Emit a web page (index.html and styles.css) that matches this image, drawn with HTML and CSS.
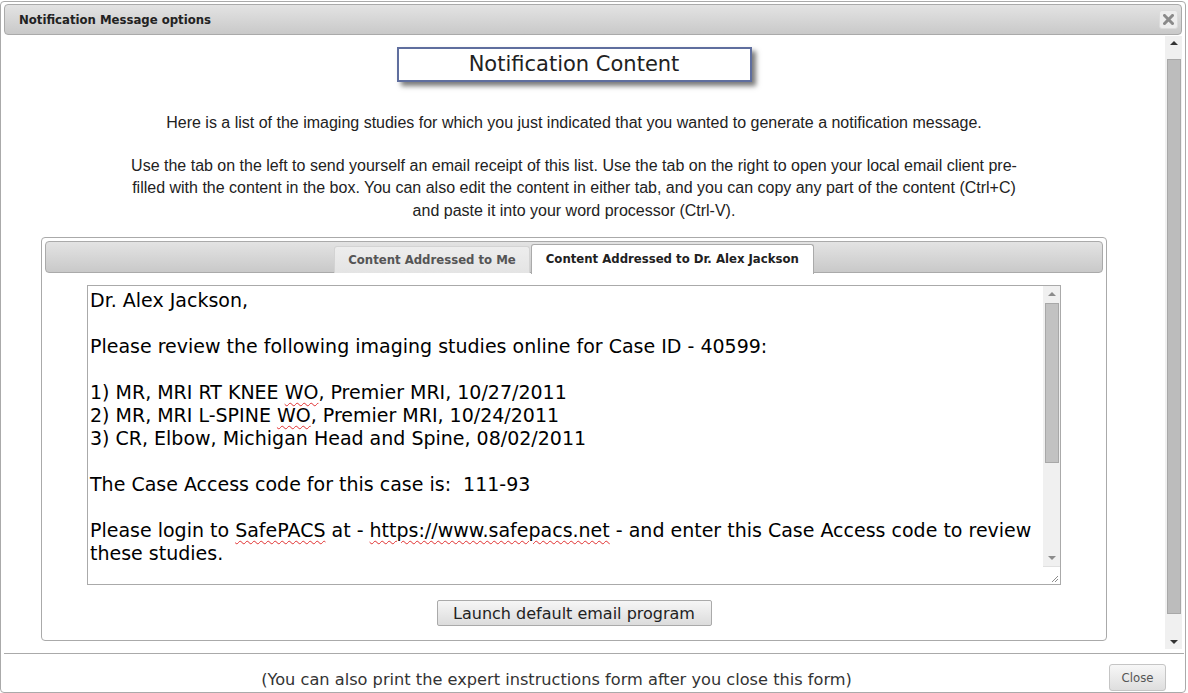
FILE: index.html
```html
<!DOCTYPE html>
<html>
<head>
<meta charset="utf-8">
<title>Notification Message options</title>
<link rel="stylesheet" href="styles.css">
</head>
<body>
<div class="dialog">
  <div class="titlebar">
    <span class="title">Notification Message options</span>
    <span class="close-x"><svg width="11" height="11" viewBox="0 0 11 11"><path d="M1.5 1.5 L9.5 9.5 M9.5 1.5 L1.5 9.5" stroke="#8a8a8a" stroke-width="3" stroke-linecap="square"/></svg></span>
  </div>
  <div class="content">
    <div class="scroll-body">
      <div class="inner">
        <div class="heading-wrap"><div class="heading">Notification Content</div></div>
        <p class="intro">Here is a list of the imaging studies for which you just indicated that you wanted to generate a notification message.</p>
        <p class="intro2">Use the tab on the left to send yourself an email receipt of this list. Use the tab on the right to open your local email client pre-filled with the content in the box. You can also edit the content in either tab, and you can copy any part of the content (Ctrl+C) and paste it into your word processor (Ctrl-V).</p>
        <div class="tabs">
          <ul class="tabnav">
            <li class="tab">Content Addressed to Me</li>
            <li class="tab active">Content Addressed to Dr. Alex Jackson</li>
          </ul>
          <div class="panel">
            <div class="textarea">
              <div class="ta-text">
                <div class="ln">Dr. Alex Jackson,</div>
                <div class="ln"></div>
                <div class="ln">Please review the following imaging studies online for Case ID - 40599:</div>
                <div class="ln"></div>
                <div class="ln">1) MR, MRI RT KNEE <span class="sp">WO</span>, Premier MRI, 10/27/2011</div>
                <div class="ln">2) MR, MRI L-SPINE <span class="sp">WO</span>, Premier MRI, 10/24/2011</div>
                <div class="ln">3) CR, Elbow, Michigan Head and Spine, 08/02/2011</div>
                <div class="ln"></div>
                <div class="ln">The Case Access code for this case is:  111-93</div>
                <div class="ln"></div>
                <div class="ln">Please login to <span class="sp">SafePACS</span> at - <span class="sp">https://www.safepacs.net</span> - and enter this Case Access code to review</div>
                <div class="ln">these studies.</div>
              </div>
              <div class="ta-scroll">
                <div class="ta-arrow up"></div>
                <div class="ta-track"><div class="ta-thumb"></div></div>
                <div class="ta-arrow down"></div>
                <div class="ta-grip"><svg width="17" height="17" viewBox="0 0 17 17"><path d="M9 15 L15 9 M12 15 L15 12" stroke="#8c8c8c" stroke-width="1"/></svg></div>
              </div>
            </div>
            <div class="btn-row"><button class="btn">Launch default email program</button></div>
          </div>
        </div>
      </div>
    </div>
    <div class="vscroll">
      <div class="vs-arrow up"></div>
      <div class="vs-track"><div class="vs-thumb"></div></div>
      <div class="vs-arrow down"></div>
    </div>
  </div>
  <div class="footer">
    <div class="footer-text">(You can also print the expert instructions form after you close this form)</div>
    <button class="close-btn">Close</button>
  </div>
</div>
</body>
</html>
```
FILE: styles.css
```css
body {
  margin: 0;
  background: #fff;
  font-family: "Liberation Sans", Arial, sans-serif;
}

.dialog {
  box-sizing: border-box;
  width: 1186px;
  height: 692px;
  margin-top: 1px;
  border: 1px solid #aaa;
  border-radius: 4px;
  padding: 2px 3px 0 3px;
  display: flex;
  flex-direction: column;
  font-family: "DejaVu Sans", sans-serif;
}

.titlebar {
  flex: none;
  box-sizing: border-box;
  height: 31px;
  border: 1px solid #aaa;
  border-radius: 4px;
  background: linear-gradient(#e3e3e3, #c9c9c9);
  display: flex;
  align-items: center;
  justify-content: space-between;
  padding: 0 3px 0 14px;
}

.title {
  font-family: "DejaVu Sans Condensed", "DejaVu Sans", sans-serif;
  font-stretch: condensed;
  font-size: 13px;
  font-weight: bold;
  color: #222;
}

.close-x {
  box-sizing: border-box;
  width: 19px;
  height: 19px;
  background: #ededed;
  border: 1px solid #dcdcdc;
  border-radius: 3px;
  display: flex;
  align-items: center;
  justify-content: center;
}

.content {
  flex: none;
  height: 618px;
  display: flex;
}

.scroll-body {
  width: 1161px;
  overflow: hidden;
}

.inner {
  box-sizing: border-box;
  width: 1066px;
  margin-left: 37px;
}

.heading-wrap {
  padding-top: 12px;
  text-align: center;
}

.heading {
  display: inline-block;
  box-sizing: border-box;
  width: 355px;
  height: 35px;
  border: 2px solid #5f6e9e;
  box-shadow: 4px 4px 5px #7a7a7a;
  font-size: 21px;
  line-height: 31px;
  color: #222;
  background: #fff;
}

.intro,
.intro2 {
  font-family: "Liberation Sans", Arial, sans-serif;
  font-size: 16px;
  line-height: 22.5px;
  color: #222;
  text-align: center;
  margin: 0 auto;
}

.intro {
  margin-top: 30px;
}

.intro2 {
  margin-top: 20px;
  max-width: 900px;
}

.tabs {
  box-sizing: border-box;
  margin-top: 15px;
  height: 404px;
  border: 1px solid #aaa;
  border-radius: 4px;
  padding: 3px;
}

.tabnav {
  box-sizing: border-box;
  height: 32px;
  margin: 0;
  padding: 0;
  list-style: none;
  border: 1px solid #aaa;
  border-radius: 4px;
  background: linear-gradient(#e3e3e3, #c9c9c9);
  display: flex;
  justify-content: center;
  align-items: flex-end;
  padding-left: 1px;
}

.tab {
  box-sizing: border-box;
  height: 27px;
  margin-bottom: -1px;
  margin-right: 1px;
  padding: 0 13px;
  border: 1px solid #d3d3d3;
  border-bottom: none;
  border-radius: 3px 3px 0 0;
  background: linear-gradient(#ededed, #e4e4e4);
  color: #555;
  font-family: "DejaVu Sans Condensed", "DejaVu Sans", sans-serif;
  font-stretch: condensed;
  font-size: 13px;
  font-weight: bold;
  line-height: 26px;
}

.tab.active {
  height: 30px;
  margin-bottom: -2px;
  padding: 0 14px;
  border-color: #aaa;
  background: #fff;
  color: #212121;
  line-height: 28px;
}

.panel {
  padding-top: 12px;
  display: flex;
  flex-direction: column;
  align-items: center;
}

.textarea {
  box-sizing: border-box;
  width: 974px;
  height: 300px;
  border: 1px solid #aaa;
  display: flex;
  background: #fff;
}

.ta-text {
  flex: 1;
  overflow: hidden;
  padding: 3px 0 0 2px;
  font-size: 19px;
  line-height: 23px;
  color: #000;
}

.ln {
  height: 23px;
  white-space: pre;
}

.sp {
  text-decoration: underline wavy #e03030;
  text-decoration-thickness: 1px;
  text-underline-offset: 3px;
}

.ta-scroll {
  width: 17px;
  display: flex;
  flex-direction: column;
  background: #f0f0f0;
}

.ta-arrow {
  height: 17px;
  position: relative;
}

.ta-arrow::after {
  content: "";
  position: absolute;
  left: 5px;
  width: 0;
  height: 0;
  border-left: 4px solid transparent;
  border-right: 4px solid transparent;
}

.ta-arrow.up::after {
  top: 6px;
  border-bottom: 4px solid #8c8c8c;
}

.ta-arrow.down::after {
  top: 7px;
  border-top: 4px solid #8c8c8c;
}

.ta-track {
  flex: 1;
  padding: 0 1px 0 2px;
}

.ta-thumb {
  box-sizing: border-box;
  height: 160px;
  background: #c2c2c2;
  border: 1px solid #a8a8a8;
}

.ta-grip {
  height: 17px;
  background: #fff;
  border-top: 1px solid #e0e0e0;
}

.btn-row {
  padding-top: 15px;
}

.btn {
  box-sizing: border-box;
  width: 275px;
  height: 26px;
  border: 1px solid #aaa;
  border-radius: 2px;
  background: linear-gradient(#f6f6f6, #dcdcdc);
  font-family: "DejaVu Sans", sans-serif;
  font-size: 16px;
  color: #222;
  padding: 0;
}

.vscroll {
  width: 17px;
  margin-top: 1px;
  height: 613px;
  display: flex;
  flex-direction: column;
  background: #f0f0f0;
}

.vs-arrow {
  height: 17px;
  position: relative;
}

.vs-arrow::after {
  content: "";
  position: absolute;
  left: 5px;
  width: 0;
  height: 0;
  border-left: 4px solid transparent;
  border-right: 4px solid transparent;
}

.vs-arrow.up::after {
  top: 5px;
  border-bottom: 4px solid #333;
}

.vs-arrow.down::after {
  top: 8px;
  border-top: 4px solid #333;
}

.vs-track {
  flex: 1;
  padding: 6px 1px 0 2px;
}

.vs-thumb {
  box-sizing: border-box;
  height: 555px;
  background: #bcbcbc;
  border: 1px solid #a8a8a8;
}

.footer {
  flex: none;
  box-sizing: border-box;
  height: 39px;
  border-top: 1px solid #aaa;
  margin: 0 -2px 0 0;
  display: flex;
  align-items: flex-start;
  padding: 10px 18px 0 0;
}

.footer-text {
  flex: 1;
  text-align: center;
  font-size: 16.2px;
  line-height: 27px;
  padding-top: 2px;
  color: #333;
}

.close-btn {
  box-sizing: border-box;
  width: 57px;
  height: 27px;
  border: 1px solid #c5c5c5;
  border-radius: 3px;
  background: linear-gradient(#f7f7f7, #dedede);
  font-family: "DejaVu Sans Condensed", "DejaVu Sans", sans-serif;
  font-stretch: condensed;
  font-size: 13px;
  color: #555;
  padding: 0;
}
```
